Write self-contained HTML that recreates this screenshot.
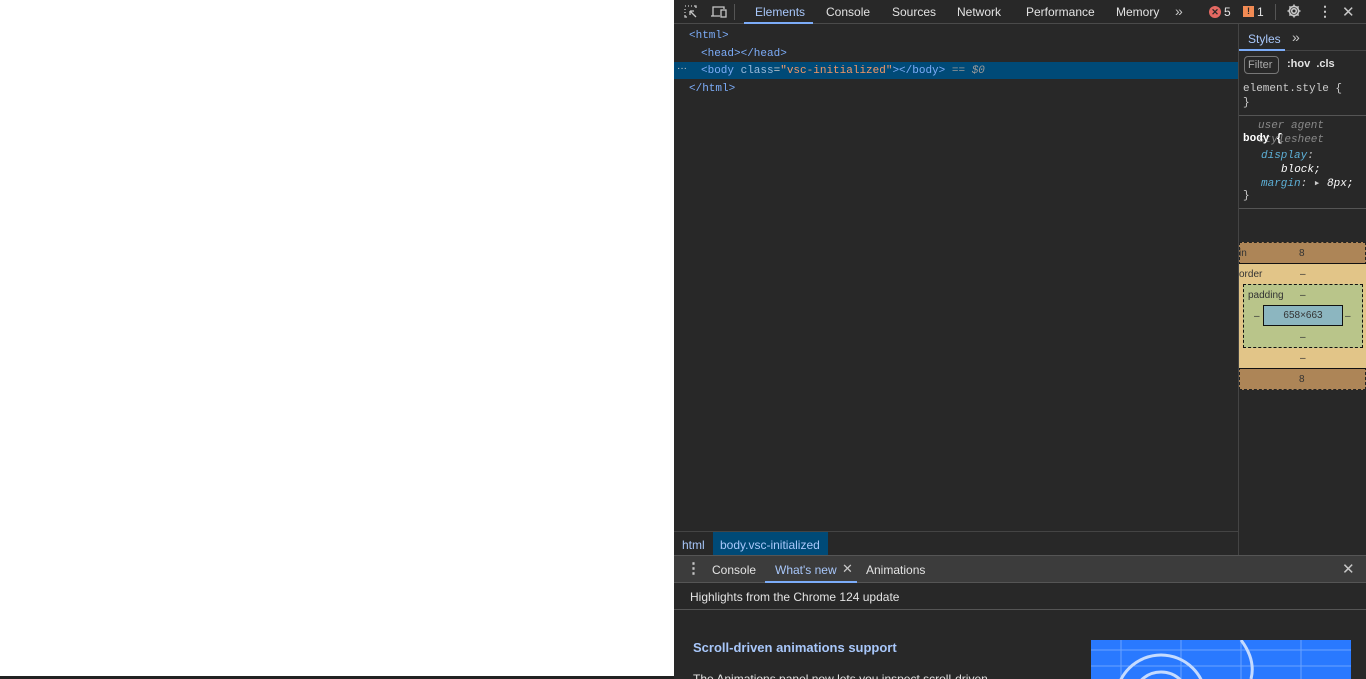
<!DOCTYPE html>
<html><head><style>
*{box-sizing:border-box;margin:0;padding:0}
html,body{width:1366px;height:679px;overflow:hidden}
body{background:#fff;font-family:"Liberation Sans",sans-serif;font-size:12px;color:#e3e3e3;position:relative}
.a{position:absolute}
.mono{font-family:"Liberation Mono",monospace;font-size:11px}
</style></head><body>
<div class="a" style="left:0;top:676px;width:674px;height:3px;background:#222"></div>
<div class="a" style="left:674px;top:0;width:1px;height:679px;background:#444"></div>
<div class="a" style="left:674px;top:0;width:692px;height:679px;background:#282828;overflow:hidden">
 <div class="a" style="left:0;top:0;width:692px;height:24px;background:#282828;border-bottom:1px solid #4a4a4a"></div>
 <svg class="a" style="left:9px;top:4px" width="16" height="16" viewBox="0 0 16 16" fill="none" stroke="#c7c7c7" stroke-width="1.3"><path d="M2 2h1M5 2h1M8 2h1M11 2h2v2M2 5v1M2 8v1M2 11v2h2" /><path d="M7 7l6 6M7 7h4M7 7v4"/></svg>
 <svg class="a" style="left:36px;top:4px" width="18" height="16" viewBox="0 0 18 16" fill="none" stroke="#c7c7c7" stroke-width="1.3"><path d="M3 12V3h11v2M1 12h9"/><rect x="11" y="6" width="5" height="7"/></svg>
 <div class="a" style="left:60px;top:4px;width:1px;height:16px;background:#555"></div>
 <div class="a" style="left:70px;top:0;width:69px;height:24px;border-bottom:2px solid #7cacf8"></div>
 <div class="a" style="left:81px;top:5px;color:#a8c7fa">Elements</div>
 <div class="a" style="left:152px;top:5px">Console</div>
 <div class="a" style="left:218px;top:5px">Sources</div>
 <div class="a" style="left:283px;top:5px">Network</div>
 <div class="a" style="left:352px;top:5px">Performance</div>
 <div class="a" style="left:442px;top:5px">Memory</div>
 <div class="a" style="left:501px;top:3px;font-size:14px;color:#c7c7c7">»</div>
 <div class="a" style="left:535px;top:6px;width:12px;height:12px;border-radius:6px;background:#e46962;color:#282828;font-size:9px;line-height:12px;text-align:center;font-weight:bold">✕</div>
 <div class="a" style="left:550px;top:5px">5</div>
 <div class="a" style="left:569px;top:6px;width:11px;height:11px;background:#f28b54;color:#282828;font-size:9px;line-height:11px;text-align:center;font-weight:bold">!</div>
 <div class="a" style="left:583px;top:5px">1</div>
 <div class="a" style="left:601px;top:4px;width:1px;height:16px;background:#555"></div>
 <svg class="a" style="left:612px;top:3px" width="16" height="16" viewBox="0 0 16 16"><g fill="none" stroke="#c7c7c7" stroke-width="1.6"><circle cx="8" cy="8" r="2.3"/><path d="M8 1.5v2M8 12.5v2M1.5 8h2M12.5 8h2M3.4 3.4l1.4 1.4M11.2 11.2l1.4 1.4M3.4 12.6l1.4-1.4M11.2 4.8l1.4-1.4"/><circle cx="8" cy="8" r="4.6"/></g></svg>
 <div class="a" style="left:644px;top:3px;font-size:14px;color:#c7c7c7;font-weight:bold">⋮</div>
 <div class="a" style="left:668px;top:3px;font-size:15px;color:#c7c7c7">✕</div>
 <div class="a" style="left:0;top:62px;width:564px;height:17px;background:#004a77"></div>
 <div class="a mono" style="left:15px;top:28px;color:#7cacf8;line-height:17.5px">
  <div>&lt;html&gt;</div>
  <div style="padding-left:12px">&lt;head&gt;&lt;/head&gt;</div>
  <div style="padding-left:12px">&lt;body <span style="color:#9bbbdc">class</span><span style="color:#ccc">=</span><span style="color:#f29766">"vsc-initialized"</span>&gt;&lt;/body&gt; <span style="color:#999">== <i>$0</i></span></div>
  <div>&lt;/html&gt;</div>
 </div>
 <div class="a" style="left:3px;top:63px;color:#ccc;font-size:10px">···</div>
 <div class="a" style="left:0;top:531px;width:564px;height:1px;background:#444"></div>
 <div class="a" style="left:8px;top:538px;color:#a8c7fa">html</div>
 <div class="a" style="left:39px;top:532px;width:115px;height:23px;background:#004a77"></div>
 <div class="a" style="left:46px;top:538px;color:#a8c7fa">body.vsc-initialized</div>
 <div class="a" style="left:564px;top:24px;width:1px;height:531px;background:#444"></div>
 <div class="a" style="left:565px;top:24px;width:127px;height:27px;border-bottom:1px solid #444"></div>
 <div class="a" style="left:565px;top:24px;width:46px;height:27px;border-bottom:2px solid #7cacf8"></div>
 <div class="a" style="left:574px;top:32px;color:#a8c7fa">Styles</div>
 <div class="a" style="left:618px;top:29px;font-size:14px;color:#c7c7c7">»</div>
 <div class="a" style="left:570px;top:56px;width:35px;height:18px;border:1px solid #777;border-radius:4px;color:#aaa;font-size:11px;padding:2px 0 0 3px">Filter</div>
 <div class="a" style="left:613px;top:58px;font-weight:bold;font-size:11px">:hov &nbsp;.cls</div>
 <div class="a mono" style="left:569px;top:82px;color:#ccc;line-height:14px">element.style {<br>}</div>
 <div class="a" style="left:565px;top:115px;width:127px;height:1px;background:#555"></div>
 <div class="a mono" style="left:584px;top:119px;color:#888;font-style:italic;line-height:14px">user agent<br>stylesheet</div>
 <div class="a mono" style="left:569px;top:133px;font-weight:bold;color:#fff">body {</div>
 <div class="a mono" style="left:587px;top:149px;color:#5db0d7;font-style:italic;line-height:14px">display<span style="color:#ccc">:</span><br><span style="color:#fff;padding-left:20px">block;</span><br>margin<span style="color:#ccc">: ▸ </span><span style="color:#fff">8px;</span></div>
 <div class="a mono" style="left:569px;top:190px;color:#ccc">}</div>
 <div class="a" style="left:565px;top:208px;width:127px;height:1px;background:#555"></div>
 <div class="a" style="left:565px;top:242px;width:127px;height:148px;background:#ad8557;border:1px dashed #222"></div>
 <div class="a" style="left:565px;top:263px;width:127px;height:106px;background:#e2c588;border-top:1px solid #111;border-bottom:1px solid #111"></div>
 <div class="a" style="left:569px;top:284px;width:120px;height:64px;background:#b9c58a;border:1px dashed #111"></div>
 <div class="a" style="left:589px;top:305px;width:80px;height:21px;background:#8cb6c0;border:1px solid #111;color:#333;font-size:10px;text-align:center;line-height:19px">658×663</div>
 <div class="a" style="left:565px;top:248px;font-size:10px;color:#333">in</div>
 <div class="a" style="left:625px;top:248px;font-size:10px;color:#333">8</div>
 <div class="a" style="left:565px;top:269px;font-size:10px;color:#333">order</div>
 <div class="a" style="left:626px;top:269px;font-size:10px;color:#333">–</div>
 <div class="a" style="left:574px;top:290px;font-size:10px;color:#333">padding</div>
 <div class="a" style="left:626px;top:290px;font-size:10px;color:#333">–</div>
 <div class="a" style="left:580px;top:311px;font-size:10px;color:#333">–</div>
 <div class="a" style="left:671px;top:311px;font-size:10px;color:#333">–</div>
 <div class="a" style="left:626px;top:332px;font-size:10px;color:#333">–</div>
 <div class="a" style="left:626px;top:353px;font-size:10px;color:#333">–</div>
 <div class="a" style="left:625px;top:374px;font-size:10px;color:#333">8</div>
 <div class="a" style="left:0;top:555px;width:692px;height:28px;background:#3c3c3c;border-top:1px solid #555;border-bottom:1px solid #555"></div>
 <div class="a" style="left:12px;top:559px;font-size:15px;font-weight:bold;color:#c7c7c7">⋮</div>
 <div class="a" style="left:38px;top:563px">Console</div>
 <div class="a" style="left:91px;top:556px;width:92px;height:27px;border-bottom:2px solid #7cacf8"></div>
 <div class="a" style="left:101px;top:563px;color:#a8c7fa">What's new</div>
 <div class="a" style="left:168px;top:561px;font-size:13px;color:#c7c7c7">✕</div>
 <div class="a" style="left:192px;top:563px">Animations</div>
 <div class="a" style="left:668px;top:560px;font-size:15px;color:#c7c7c7">✕</div>
 <div class="a" style="left:16px;top:590px">Highlights from the Chrome 124 update</div>
 <div class="a" style="left:0;top:609px;width:692px;height:1px;background:#555"></div>
 <div class="a" style="left:19px;top:640px;font-size:13px;font-weight:bold;color:#a8c7fa">Scroll-driven animations support</div>
 <div class="a" style="left:19px;top:672px;font-size:12px;white-space:nowrap">The Animations panel now lets you inspect scroll-driven</div>
 <div class="a" style="left:417px;top:640px;width:260px;height:39px;background:#2979ff;overflow:hidden">
  <svg width="260" height="39"><g stroke="#6aa4ff" fill="none" stroke-width="1"><path d="M0 10H260M0 26H260M30 0V39M90 0V39M150 0V39M210 0V39"/></g><circle cx="70" cy="60" r="45" stroke="#c5dbff" stroke-width="3" fill="none"/><circle cx="70" cy="60" r="28" stroke="#c5dbff" stroke-width="3" fill="none"/><path d="M150 0Q165 20 160 39" stroke="#c5dbff" stroke-width="3" fill="none"/></svg>
 </div>
</div>
</body></html>
